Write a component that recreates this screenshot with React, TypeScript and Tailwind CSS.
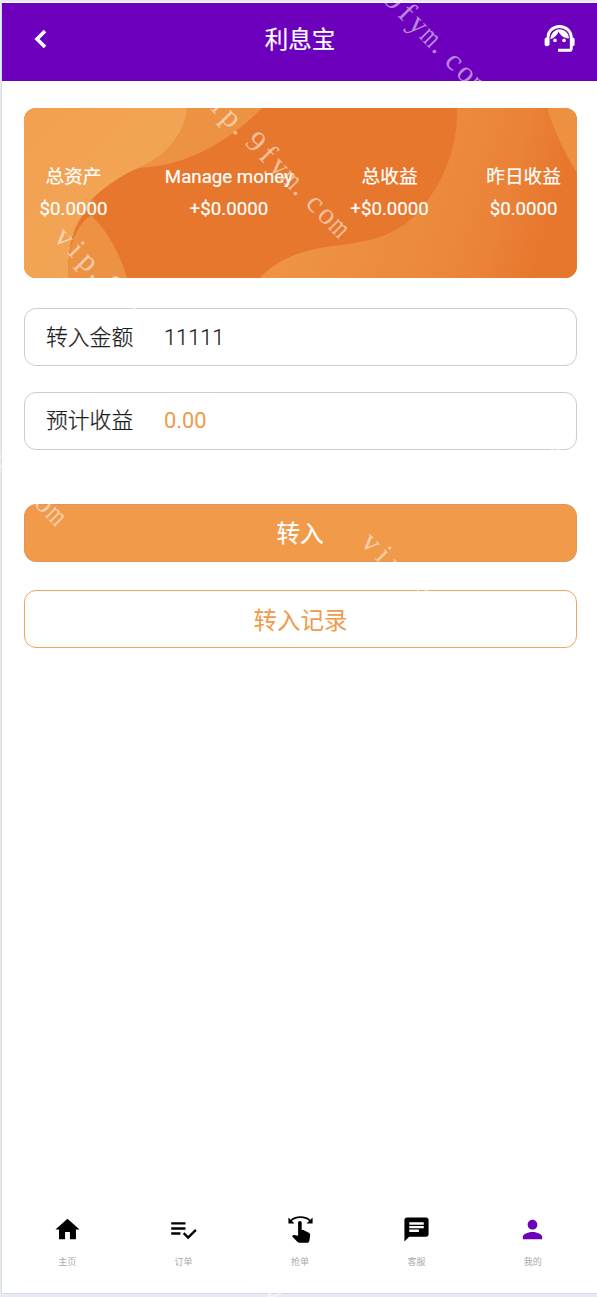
import React, { useState } from 'react';
import { MdChat, MdHome, MdPerson, MdSwipe } from 'react-icons/md';

const stats = [
  { label: '总资产', value: '$0.0000' },
  { label: 'Manage money', value: '+$0.0000' },
  { label: '总收益', value: '+$0.0000' },
  { label: '昨日收益', value: '$0.0000' },
];

function OrdersIcon({ className }: { className?: string }) {
  return (
    <svg className={className} viewBox="0 0 29 29" fill="none" stroke="currentColor" strokeWidth="2.4">
      <path d="M2.2 8.4h14.3M2.2 13.5h14.3M2.2 18.5h9.2" />
      <path d="M14.7 18.2l4.4 4.4 7.8-7.8" />
    </svg>
  );
}

function SupportIcon() {
  return (
    <svg className="h-[30px] w-8" viewBox="0 0 32 30" fill="currentColor">
      <path
        d="M4 21V14C4 7 9 2.5 15.5 2.5S27.3 7 27.3 14V24.4Q27.3 26.3 25.4 26.3H14"
        fill="none"
        stroke="currentColor"
        strokeWidth="2.9"
      />
      <rect x="0.6" y="13.6" width="4.6" height="8.6" rx="2" />
      <rect x="26" y="13.6" width="4.6" height="8.6" rx="2" />
      <path d="M14.2 5.4C10 6 6.8 9.6 6.3 15.2C10.6 13.6 13.4 10.8 14.6 7.4C16.4 11.6 20 14.2 25 14.2C24.6 8.6 20.2 5 14.2 5.4Z" />
      <circle cx="11" cy="16.4" r="1.8" />
      <circle cx="20" cy="16.4" r="1.8" />
    </svg>
  );
}

const tabs = [
  { id: 'home', label: '主页', icon: MdHome },
  { id: 'orders', label: '订单', icon: OrdersIcon },
  { id: 'grab', label: '抢单', icon: MdSwipe },
  { id: 'service', label: '客服', icon: MdChat },
  { id: 'mine', label: '我的', icon: MdPerson },
];

const STAMP = 'vip.9fym.com';
const STEP = 17.1;

// Centre of the first letter of every stamp, and the letters that are on the page
const stamps = [
  { x: 345, y: -47, from: 4, to: 12 },
  { x: 206, y: 95, from: 1, to: 12 },
  { x: 63, y: 239, from: 0, to: 9 },
  { x: -77, y: 383, from: 6, to: 12 },
  { x: 370, y: 544, from: 0, to: 9 },
  { x: 555, y: 448, from: 0, to: 3 },
  { x: 272, y: 1294, from: 0, to: 1 },
];

function Watermark() {
  return (
    <svg
      className="pointer-events-none absolute inset-0 h-full w-full"
      viewBox="0 0 597 1297"
      fill="#fff"
      fillOpacity={0.55}
      fontFamily="'Liberation Serif', serif"
      fontSize={30}
      textAnchor="middle"
    >
      {stamps.map(({ x, y, from, to }) => (
        <g key={`${x},${y}`} transform={`translate(${x} ${y}) rotate(45.3)`}>
          {STAMP.split('').map((char, i) =>
            i < from || i >= to ? null : (
              <text
                key={i}
                transform={`translate(${i * STEP - (char === '.' ? 4 : 0)} 7) scale(${char === 'm' ? 0.7 : 1} 1)`}
              >
                {char}
              </text>
            )
          )}
        </g>
      ))}
    </svg>
  );
}

function CardWaves() {
  return (
    <svg className="absolute inset-0 h-full w-full" viewBox="0 0 553 170" preserveAspectRatio="none">
      <defs>
        <linearGradient id="leaf" x1="0" y1="0" x2="1" y2="1">
          <stop offset="0" stopColor="#f2a04f" />
          <stop offset="1" stopColor="#f2a75a" />
        </linearGradient>
        <linearGradient id="band" gradientUnits="userSpaceOnUse" x1="270" y1="110" x2="505" y2="180">
          <stop offset="0" stopColor="#ee9344" />
          <stop offset="0.55" stopColor="#ec893d" />
          <stop offset="0.8" stopColor="#ea8237" />
          <stop offset="1" stopColor="#e7772d" />
        </linearGradient>
      </defs>
      <rect width="553" height="170" fill="#e7772d" />
      <path d="M163 0H238C214 24 172 58 114 60Z" fill="#ed9243" />
      <path d="M67 107C84 124 95 144 103 170H44C44 142 49 120 67 107Z" fill="#ed9243" />
      <path d="M0 0H163C160 25 145 46 114 60C94 69 80 80 69 90C69 97 64 100 56 111C47 126 44 145 44 170H0Z" fill="url(#leaf)" />
      <path d="M69 90C63 96 60 101 69 110L74 100Z" fill="#ea8538" />
      <path
        d="M433 0C434 36 422 71 397 101C370 133 336 134 302 139C268 144 247 157 236 170H553V0Z"
        fill="url(#band)"
      />
      <path d="M523 0H553V65C542 47 530 24 523 0Z" fill="#ed9040" />
    </svg>
  );
}

export default function App() {
  const [amount, setAmount] = useState('11111');
  const [active, setActive] = useState('mine');

  return (
    <div className="relative h-[1297px] w-[597px] overflow-hidden bg-[#e6eaf3] pl-px pt-0.5 font-[Roboto,'Noto_Sans_CJK_SC',sans-serif]">
      <div className="flex h-[1292px] flex-col border-b border-l border-[#d9dce3] bg-white">
        <header className="mt-px grid h-[78px] shrink-0 grid-cols-[1fr_auto_1fr] items-center bg-[#6c00bd] pl-[31px] pr-[21px] text-white">
          <button type="button" aria-label="Back" className="pb-1.5">
            <svg className="h-5 w-4" viewBox="0 0 16 20" fill="none" stroke="currentColor" strokeWidth="3.6">
              <path d="M12 2L4 10l8 8" />
            </svg>
          </button>
          <h1 className="-ml-[9px] pb-1 text-[23.5px] font-normal leading-8 [-webkit-text-stroke:0.2px_white]">利息宝</h1>
          <button type="button" aria-label="Support" className="justify-self-end pb-1.5">
            <SupportIcon />
          </button>
        </header>

        <main className="flex flex-1 flex-col pl-[22px] pr-5 pt-[27px]">
          <section className="relative h-[170px] overflow-hidden rounded-xl">
            <CardWaves />
            <div className="relative flex justify-between pl-[15.5px] pr-4 pt-[53px] text-center text-[18.7px] leading-8 text-white [-webkit-text-stroke:0.2px_white]">
              {stats.map((stat) => (
                <div key={stat.label}>
                  <div>{stat.label}</div>
                  <div>{stat.value}</div>
                </div>
              ))}
            </div>
          </section>

          <label className="mt-[30px] flex h-[58px] items-center rounded-xl border border-[#cccccc] pl-[21px] pt-0.5 text-[21.8px] text-[#1c1c1c]">
            <span className="w-[118px] font-light [-webkit-text-stroke:0.25px_#1c1c1c]">转入金额</span>
            <input
              className="min-w-0 flex-1 bg-transparent text-[21.8px] font-light outline-none [-webkit-text-stroke:0.2px_#1c1c1c]"
              value={amount}
              onChange={(e) => setAmount(e.target.value)}
            />
          </label>

          <div className="mt-[26px] flex h-[58px] items-center rounded-xl border border-[#cccccc] pl-[21px] text-[21.8px] text-[#1c1c1c]">
            <span className="w-[118px] font-light [-webkit-text-stroke:0.25px_#1c1c1c]">预计收益</span>
            <span className="text-[#f09a4a]">0.00</span>
          </div>

          <button
            type="button"
            className="mt-[54px] h-[58px] rounded-xl border border-[#e0965a] bg-[#f09a4a] pr-px pt-1 text-[23.5px] text-white [-webkit-text-stroke:0.2px_white]"
          >
            转入
          </button>
          <button
            type="button"
            className="mt-7 h-[58px] rounded-xl border border-[#eda560] pt-1.5 text-[23.5px] text-[#f09a4a]"
          >
            转入记录
          </button>
        </main>

        <nav className="flex h-[85px] shrink-0 pl-[7px] pr-1.5">
          {tabs.map(({ id, label, icon: Icon }) => (
            <button
              key={id}
              type="button"
              onClick={() => setActive(id)}
              className="flex flex-1 flex-col items-center pt-[7px]"
            >
              <Icon className={active === id ? 'h-[29px] w-[29px] text-[#6c00bd]' : 'h-[29px] w-[29px] text-black'} />
              <span className="mt-2.5 text-[9px] leading-4 text-[#aaaaaa]">{label}</span>
            </button>
          ))}
        </nav>
      </div>
      <Watermark />
    </div>
  );
}
